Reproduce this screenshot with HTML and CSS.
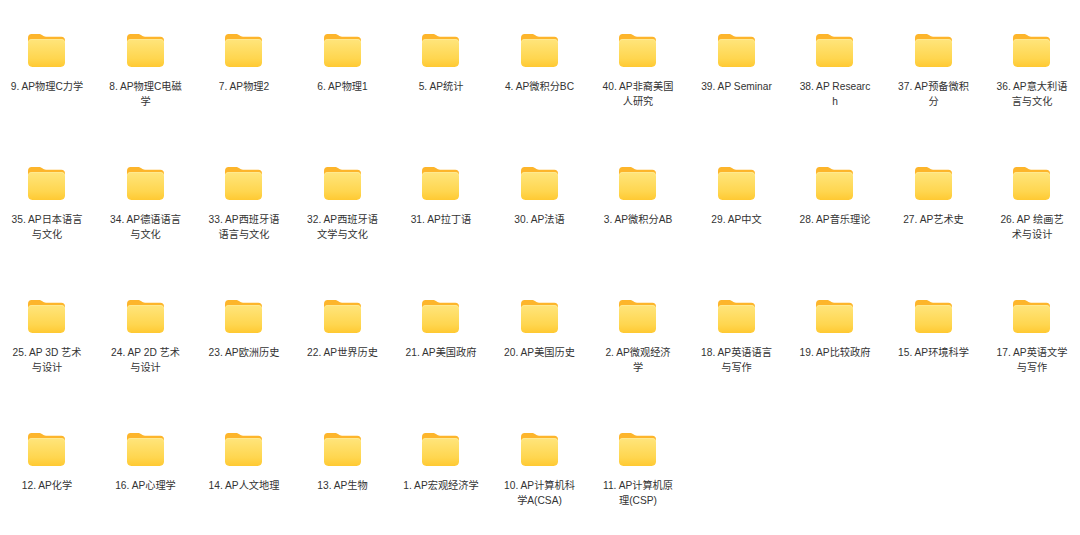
FILE: index.html
```html
<!DOCTYPE html>
<html lang="zh-CN">

<head>
  <title>AP</title>
  <meta charset="utf-8">
  <meta name="viewport" content="width=device-width, initial-scale=1">
  <link rel="stylesheet" href="styles.css">
</head>

<body>
  <svg class="defs" width="0" height="0">
    <defs>
      <linearGradient id="folderFront" x1="0" y1="0" x2="0" y2="1">
        <stop offset="0" stop-color="#ffe57c"/>
        <stop offset="0.7" stop-color="#ffd64f"/>
        <stop offset="1" stop-color="#ffc932"/>
      </linearGradient>
      <symbol id="folder" viewBox="0 0 37 33">
        <path d="M0 4C0 1.5 1.4 0 3.6 0H10.6C12.6 0 13.6 .6 14.8 1.6C15.6 2.3 16.4 2.8 18 2.8H33.4C35.6 2.8 37 4.2 37 6.4V14H0Z" fill="#fdb52b"/>
        <path d="M0 8.6C0 6.4 1.4 5 3.6 5H33.4C35.6 5 37 6.4 37 8.6V28.6C37 31.4 35.4 33 32.6 33H4.4C1.6 33 0 31.4 0 28.6Z" fill="url(#folderFront)"/>
        <path d="M.5 8.6C.5 6.6 1.7 5.5 3.6 5.5H33.4C35.3 5.5 36.5 6.6 36.5 8.6" fill="none" stroke="#ffeb9a" stroke-width=".7"/>
      </symbol>
    </defs>
  </svg>

  <main class="grid">
    <div class="item"><svg class="icon"><use href="#folder"/></svg><p class="name">9. AP物理C力学</p></div>
    <div class="item"><svg class="icon"><use href="#folder"/></svg><p class="name">8. AP物理C电磁学</p></div>
    <div class="item"><svg class="icon"><use href="#folder"/></svg><p class="name">7. AP物理2</p></div>
    <div class="item"><svg class="icon"><use href="#folder"/></svg><p class="name">6. AP物理1</p></div>
    <div class="item"><svg class="icon"><use href="#folder"/></svg><p class="name">5. AP统计</p></div>
    <div class="item"><svg class="icon"><use href="#folder"/></svg><p class="name">4. AP微积分BC</p></div>
    <div class="item"><svg class="icon"><use href="#folder"/></svg><p class="name">40. AP非裔美国人研究</p></div>
    <div class="item"><svg class="icon"><use href="#folder"/></svg><p class="name">39. AP Seminar</p></div>
    <div class="item"><svg class="icon"><use href="#folder"/></svg><p class="name">38. AP Research</p></div>
    <div class="item"><svg class="icon"><use href="#folder"/></svg><p class="name">37. AP预备微积分</p></div>
    <div class="item"><svg class="icon"><use href="#folder"/></svg><p class="name">36. AP意大利语言与文化</p></div>

    <div class="item"><svg class="icon"><use href="#folder"/></svg><p class="name">35. AP日本语言与文化</p></div>
    <div class="item"><svg class="icon"><use href="#folder"/></svg><p class="name">34. AP德语语言与文化</p></div>
    <div class="item"><svg class="icon"><use href="#folder"/></svg><p class="name">33. AP西班牙语语言与文化</p></div>
    <div class="item"><svg class="icon"><use href="#folder"/></svg><p class="name">32. AP西班牙语文学与文化</p></div>
    <div class="item"><svg class="icon"><use href="#folder"/></svg><p class="name">31. AP拉丁语</p></div>
    <div class="item"><svg class="icon"><use href="#folder"/></svg><p class="name">30. AP法语</p></div>
    <div class="item"><svg class="icon"><use href="#folder"/></svg><p class="name">3. AP微积分AB</p></div>
    <div class="item"><svg class="icon"><use href="#folder"/></svg><p class="name">29. AP中文</p></div>
    <div class="item"><svg class="icon"><use href="#folder"/></svg><p class="name">28. AP音乐理论</p></div>
    <div class="item"><svg class="icon"><use href="#folder"/></svg><p class="name">27. AP艺术史</p></div>
    <div class="item"><svg class="icon"><use href="#folder"/></svg><p class="name">26. AP 绘画艺<br>术与设计</p></div>

    <div class="item"><svg class="icon"><use href="#folder"/></svg><p class="name">25. AP 3D 艺术与设计</p></div>
    <div class="item"><svg class="icon"><use href="#folder"/></svg><p class="name">24. AP 2D 艺术与设计</p></div>
    <div class="item"><svg class="icon"><use href="#folder"/></svg><p class="name">23. AP欧洲历史</p></div>
    <div class="item"><svg class="icon"><use href="#folder"/></svg><p class="name">22. AP世界历史</p></div>
    <div class="item"><svg class="icon"><use href="#folder"/></svg><p class="name">21. AP美国政府</p></div>
    <div class="item"><svg class="icon"><use href="#folder"/></svg><p class="name">20. AP美国历史</p></div>
    <div class="item"><svg class="icon"><use href="#folder"/></svg><p class="name">2. AP微观经济<br>学</p></div>
    <div class="item"><svg class="icon"><use href="#folder"/></svg><p class="name">18. AP英语语言与写作</p></div>
    <div class="item"><svg class="icon"><use href="#folder"/></svg><p class="name">19. AP比较政府</p></div>
    <div class="item"><svg class="icon"><use href="#folder"/></svg><p class="name">15. AP环境科学</p></div>
    <div class="item"><svg class="icon"><use href="#folder"/></svg><p class="name">17. AP英语文学与写作</p></div>

    <div class="item"><svg class="icon"><use href="#folder"/></svg><p class="name">12. AP化学</p></div>
    <div class="item"><svg class="icon"><use href="#folder"/></svg><p class="name">16. AP心理学</p></div>
    <div class="item"><svg class="icon"><use href="#folder"/></svg><p class="name">14. AP人文地理</p></div>
    <div class="item"><svg class="icon"><use href="#folder"/></svg><p class="name">13. AP生物</p></div>
    <div class="item"><svg class="icon"><use href="#folder"/></svg><p class="name name-wide">1. AP宏观经济学</p></div>
    <div class="item"><svg class="icon"><use href="#folder"/></svg><p class="name">10. AP计算机科学A(CSA)</p></div>
    <div class="item"><svg class="icon"><use href="#folder"/></svg><p class="name">11. AP计算机原理(CSP)</p></div>
  </main>
</body>

</html>
```

FILE: styles.css
```css
* {
  box-sizing: border-box;
  margin: 0;
}

body {
  background-color: #fff;
  font-family: "Liberation Sans", "Noto Sans CJK SC", sans-serif;
}

.defs {
  display: block;
  height: 0;
}

/* 11 folders a row, fixed pitch */
.grid {
  display: grid;
  grid-template-columns: repeat(11, 90px);
  column-gap: 8.5px;
  row-gap: 58px;
  padding: 34px 0 0 2px;
}

.item {
  display: flex;
  flex-direction: column;
  align-items: center;
}

.icon {
  display: block;
  width: 37px;
  height: 33px;
  margin-right: 1px;
}

.name {
  width: 75px;
  margin-top: 12px;
  font-size: 10.2px;
  line-height: 15px;
  color: #333;
  text-align: center;
  word-break: break-all;
}

/* this one stays on one line */
.name-wide {
  width: auto;
}
```
